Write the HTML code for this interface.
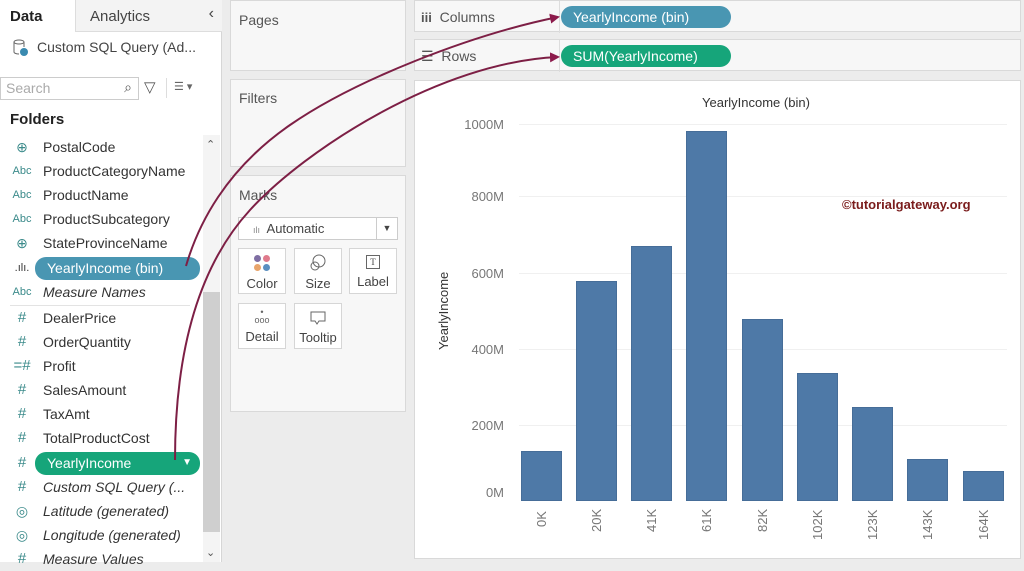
<!DOCTYPE html>
<html><head><meta charset="utf-8"><style>
*{box-sizing:border-box;margin:0;padding:0}
body{width:1024px;height:562px;overflow:hidden;background:#ececec;font-family:"Liberation Sans",sans-serif;color:#333;position:relative}
.abs{position:absolute}
.left{left:0;top:0;width:222px;height:562px;background:#fff;border-right:1px solid #d6d6d6}
.item{position:absolute;left:0;height:24px;font-size:14px;line-height:24px;color:#333}
.item .ic{position:absolute;left:10px;width:24px;text-align:center;font-size:11px;color:#3a8a8a}
.item .t{position:absolute;left:43px;white-space:nowrap}
.it{font-style:italic}
.box{position:absolute;background:#f7f7f7;border:1px solid #d9d9d9}
.lbl{font-size:14px;color:#555}
.card{position:absolute;width:48px;height:46px;background:#fff;border:1px solid #d6d6d6;font-size:13px;text-align:center;color:#444}
.pill{position:absolute;height:22px;border-radius:11px;color:#fff;font-size:14px;line-height:22px;padding-left:12px}
.bar{position:absolute;background:#4e79a7;border:1px solid #466d98}
.yl{position:absolute;right:0;font-size:13px;color:#777;text-align:right;width:60px}
.xl{position:absolute;font-size:13px;color:#777;transform:rotate(-90deg);transform-origin:left top;white-space:nowrap}
.grid{position:absolute;left:519px;width:488px;height:1px;background:#f0f0f0}
</style></head><body>
<div class="abs left">
 <div class="abs" style="left:0;top:0;width:75px;height:32px;font-size:15px;font-weight:bold;padding:8px 0 0 10px;color:#222">Data</div>
 <div class="abs" style="left:75px;top:0;width:147px;height:32px;background:#f3f3f3;border-left:1px solid #ddd;border-bottom:1px solid #ddd;font-size:15px;padding:8px 0 0 14px;color:#444">Analytics<span style="position:absolute;right:8px;top:5px;font-size:16px">‹</span></div>
 <svg class="abs" style="left:12px;top:38px" width="18" height="20"><ellipse cx="7" cy="4" rx="5" ry="2" fill="none" stroke="#666"/><path d="M2 4v10c0 1 2 2 5 2M12 4v5" fill="none" stroke="#666"/><circle cx="12" cy="14" r="4" fill="#3a8ab0"/></svg>
 <div class="abs" style="left:37px;top:39px;font-size:14px;color:#444">Custom SQL Query (Ad...</div>
 <div class="abs" style="left:0;top:77px;width:139px;height:23px;border:1px solid #ccc;background:#fff;font-size:14px;color:#aaa;padding:2px 5px">Search<span style="position:absolute;right:6px;top:1px;color:#555">⌕</span></div>
 <div class="abs" style="left:144px;top:78px;font-size:15px;color:#555">▽</div>
 <div class="abs" style="left:166px;top:78px;width:1px;height:20px;background:#ddd"></div>
 <div class="abs" style="left:174px;top:80px;font-size:11px;color:#666">☰ ▾</div>
 <div class="abs" style="left:10px;top:111px;font-size:15px;font-weight:bold;color:#222">Folders</div>
 <div class="abs" style="left:203px;top:135px;width:17px;height:427px;background:#f4f4f4"></div>
 <div class="abs" style="left:203px;top:292px;width:17px;height:240px;background:#cfcfcf"></div>
 <div class="abs" style="left:206px;top:138px;font-size:11px;color:#555">⌃</div>
 <div class="abs" style="left:206px;top:546px;font-size:11px;color:#555">⌄</div>
 <div class="item" style="top:135px"><span class="ic" style="font-size:14px">⊕</span><span class="t">PostalCode</span></div>
 <div class="item" style="top:159px"><span class="ic">Abc</span><span class="t">ProductCategoryName</span></div>
 <div class="item" style="top:183px"><span class="ic">Abc</span><span class="t">ProductName</span></div>
 <div class="item" style="top:207px"><span class="ic">Abc</span><span class="t">ProductSubcategory</span></div>
 <div class="item" style="top:231px"><span class="ic" style="font-size:14px">⊕</span><span class="t">StateProvinceName</span></div>
 <div class="item" style="top:256px"><span class="ic" style="color:#333">.ılı.</span></div>
 <div class="pill" style="left:35px;top:257px;width:165px;background:#4996b2;height:23px">YearlyIncome (bin)</div>
 <div class="item" style="top:280px"><span class="ic">Abc</span><span class="t it">Measure Names</span></div>
 <div class="abs" style="left:10px;top:305px;width:180px;height:1px;background:#e3e3e3"></div>
 <div class="item" style="top:306px"><span class="ic" style="font-size:15px">#</span><span class="t">DealerPrice</span></div>
 <div class="item" style="top:330px"><span class="ic" style="font-size:15px">#</span><span class="t">OrderQuantity</span></div>
 <div class="item" style="top:354px"><span class="ic" style="font-size:15px">=#</span><span class="t">Profit</span></div>
 <div class="item" style="top:378px"><span class="ic" style="font-size:15px">#</span><span class="t">SalesAmount</span></div>
 <div class="item" style="top:402px"><span class="ic" style="font-size:15px">#</span><span class="t">TaxAmt</span></div>
 <div class="item" style="top:426px"><span class="ic" style="font-size:15px">#</span><span class="t">TotalProductCost</span></div>
 <div class="item" style="top:451px"><span class="ic" style="font-size:15px">#</span></div>
 <div class="pill" style="left:35px;top:452px;width:165px;background:#16a57a;height:23px">YearlyIncome<span style="position:absolute;right:8px;font-size:10px">▼</span></div>
 <div class="item" style="top:475px"><span class="ic" style="font-size:15px">#</span><span class="t it">Custom SQL Query (...</span></div>
 <div class="item" style="top:499px"><span class="ic" style="font-size:14px">◎</span><span class="t it">Latitude (generated)</span></div>
 <div class="item" style="top:523px"><span class="ic" style="font-size:14px">◎</span><span class="t it">Longitude (generated)</span></div>
 <div class="item" style="top:547px"><span class="ic" style="font-size:15px">#</span><span class="t it">Measure Values</span></div>
</div>

<div class="box" style="left:230px;top:0;width:176px;height:71px"><div class="lbl abs" style="left:8px;top:11px">Pages</div></div>
<div class="box" style="left:230px;top:79px;width:176px;height:88px"><div class="lbl abs" style="left:8px;top:10px">Filters</div></div>
<div class="box" style="left:230px;top:175px;width:176px;height:237px">
 <div class="lbl abs" style="left:8px;top:11px">Marks</div>
 <div class="abs" style="left:7px;top:41px;width:160px;height:23px;background:#fff;border:1px solid #ccc;font-size:13px;line-height:21px;padding-left:14px;color:#444"><span style="font-size:9px;color:#888">ılı</span>&nbsp; Automatic<span style="position:absolute;right:0;top:0;width:21px;height:21px;border-left:1px solid #ccc;text-align:center;font-size:9px">▼</span></div>
 <div class="card" style="left:7px;top:72px"><div style="margin:6px auto 0;width:16px;height:16px;display:grid;grid-template-columns:1fr 1fr;gap:2px"><i style="background:#7f6ea3;border-radius:50%"></i><i style="background:#e07a8c;border-radius:50%"></i><i style="background:#e8a46b;border-radius:50%"></i><i style="background:#5b8fc0;border-radius:50%"></i></div><div style="margin-top:5px">Color</div></div>
 <div class="card" style="left:63px;top:72px"><svg style="margin-top:5px" width="18" height="18"><circle cx="10" cy="7" r="6" fill="none" stroke="#666"/><circle cx="6" cy="12" r="4" fill="none" stroke="#666"/></svg><div style="margin-top:1px">Size</div></div>
 <div class="card" style="left:118px;top:72px"><div style="margin:6px auto 0;width:14px;height:14px;border:1px solid #666;font-size:9px;line-height:12px;font-family:'Liberation Serif'">T</div><div style="margin-top:5px">Label</div></div>
 <div class="card" style="left:7px;top:127px"><div style="margin-top:4px;font-size:9px;color:#666;line-height:8px">•<br>ooo</div><div style="margin-top:5px">Detail</div></div>
 <div class="card" style="left:63px;top:127px"><svg style="margin-top:6px" width="18" height="16"><path d="M2 2h14v9H10l-2 3-2-3H2z" fill="none" stroke="#666"/></svg><div style="margin-top:1px">Tooltip</div></div>
</div>

<div class="box" style="left:414px;top:0;width:607px;height:32px"><div class="abs lbl" style="left:6px;top:8px;color:#555"><b style="font-size:13px">iii</b>&nbsp; Columns</div><div class="abs" style="left:144px;top:0;width:1px;height:32px;background:#ddd"></div></div>
<div class="box" style="left:414px;top:39px;width:607px;height:32px"><div class="abs lbl" style="left:6px;top:8px;color:#555">☰&nbsp; Rows</div><div class="abs" style="left:144px;top:0;width:1px;height:32px;background:#ddd"></div></div>
<div class="pill" style="left:561px;top:6px;width:170px;background:#4996b2">YearlyIncome (bin)</div>
<div class="pill" style="left:561px;top:45px;width:170px;background:#16a57a">SUM(YearlyIncome)</div>

<div class="abs" style="left:414px;top:80px;width:607px;height:479px;background:#fff;border:1px solid #d9d9d9"></div>
<div class="abs" style="left:702px;top:95px;font-size:13px;color:#333">YearlyIncome (bin)</div>
<div class="abs" style="left:436px;top:350px;font-size:13px;color:#333;transform:rotate(-90deg);transform-origin:left top">YearlyIncome</div>
<div class="grid" style="top:124px"></div><div class="grid" style="top:196px"></div><div class="grid" style="top:273px"></div><div class="grid" style="top:349px"></div><div class="grid" style="top:425px"></div>
<div class="yl" style="left:444px;top:117px">1000M</div>
<div class="yl" style="left:444px;top:189px">800M</div>
<div class="yl" style="left:444px;top:266px">600M</div>
<div class="yl" style="left:444px;top:342px">400M</div>
<div class="yl" style="left:444px;top:418px">200M</div>
<div class="yl" style="left:444px;top:485px">0M</div>
<div class="bar" style="left:521px;top:451px;width:41px;height:50px"></div>
<div class="bar" style="left:576px;top:281px;width:41px;height:220px"></div>
<div class="bar" style="left:631px;top:246px;width:41px;height:255px"></div>
<div class="bar" style="left:686px;top:131px;width:41px;height:370px"></div>
<div class="bar" style="left:742px;top:319px;width:41px;height:182px"></div>
<div class="bar" style="left:797px;top:373px;width:41px;height:128px"></div>
<div class="bar" style="left:852px;top:407px;width:41px;height:94px"></div>
<div class="bar" style="left:907px;top:459px;width:41px;height:42px"></div>
<div class="bar" style="left:963px;top:471px;width:41px;height:30px"></div>
<div class="xl" style="left:534px;top:527px">0K</div>
<div class="xl" style="left:589px;top:532px">20K</div>
<div class="xl" style="left:644px;top:532px">41K</div>
<div class="xl" style="left:699px;top:532px">61K</div>
<div class="xl" style="left:755px;top:532px">82K</div>
<div class="xl" style="left:810px;top:540px">102K</div>
<div class="xl" style="left:865px;top:540px">123K</div>
<div class="xl" style="left:920px;top:540px">143K</div>
<div class="xl" style="left:976px;top:540px">164K</div>
<div class="abs" style="left:842px;top:197px;font-size:13px;font-weight:bold;color:#7a1c1c">©tutorialgateway.org</div>

<svg class="abs" style="left:0;top:0" width="1024" height="562">
<defs><marker id="a" markerWidth="10" markerHeight="10" refX="8" refY="5" orient="auto" markerUnits="userSpaceOnUse"><path d="M0 0L10 5L0 10z" fill="#8c1a4b"/></marker></defs>
<path d="M186 266C198 225 225 170 290 125S470 35 558 17" fill="none" stroke="#7d1f45" stroke-width="2" marker-end="url(#a)"/>
<path d="M175 460C175 360 195 270 250 210S440 62 558 57" fill="none" stroke="#7d1f45" stroke-width="2" marker-end="url(#a)"/>
</svg>
</body></html>
